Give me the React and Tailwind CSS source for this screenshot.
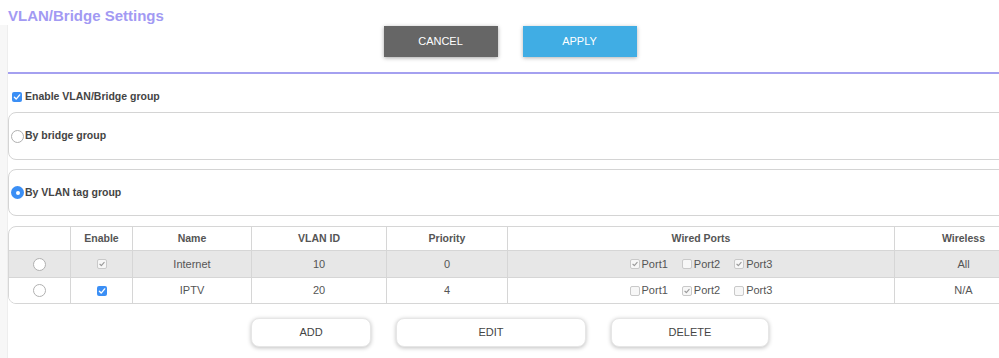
import React from "react";

const Check = ({ color }) => (
  <svg viewBox="0 0 10 10" className="w-full h-full">
    <path d="M2.4 5.3 L4.2 7.1 L7.7 2.9" fill="none" stroke={color} strokeWidth="1.4" strokeLinecap="round" strokeLinejoin="round" />
  </svg>
);

const Checkbox = ({ checked, blue }) => {
  if (blue) {
    return (
      <span className="inline-block w-[10px] h-[10px] rounded-[2px] bg-[#3b8ff5] shrink-0">
        <Check color="#ffffff" />
      </span>
    );
  }
  return (
    <span className="inline-block w-[10px] h-[10px] rounded-[2px] border border-[#c9c9c9] bg-[#f7f7f7] shrink-0">
      {checked && <Check color="#9a9a9a" />}
    </span>
  );
};

const Radio = ({ checked }) =>
  checked ? (
    <span className="w-[13px] h-[13px] rounded-full bg-[#3b8ff5] flex items-center justify-center shrink-0">
      <span className="w-[4px] h-[4px] rounded-full bg-white"></span>
    </span>
  ) : (
    <span className="w-[13px] h-[13px] rounded-full border border-[#b0b0b0] bg-white shrink-0"></span>
  );

const cols = "grid grid-cols-[61px_62px_119px_135px_121px_387px_138px]";
const cell = "flex items-center justify-center border-l border-[#d6d6d6]";

const rows = [
  { name: "Internet", id: "10", pri: "0", ports: [true, false, true], wireless: "All", enabled: "gray", bg: "bg-[#e7e7e7]", h: "h-[27px]" },
  { name: "IPTV", id: "20", pri: "4", ports: [false, true, false], wireless: "N/A", enabled: "blue", bg: "bg-white", h: "h-[26px]" },
];

export default function App() {
  return (
    <div className="flex h-[358px] overflow-hidden bg-white font-['Liberation_Sans',Arial,sans-serif]">
      <div className="w-[8px] shrink-0 mt-[25px] bg-[#f7f7f7] border-r border-[#eeeeee]"></div>
      <div className="w-[1004px] shrink-0 flex flex-col">
        <h1 className="mt-[7px] h-[18px] leading-[18px] text-[15px] font-bold text-[#a29af3]">
          VLAN/Bridge Settings
        </h1>

        <div className="mt-[1px] flex justify-center gap-[25px]">
          <button className="w-[114px] h-[31px] bg-[#666666] text-white text-[11px] shadow-[0_1px_4px_rgba(0,0,0,0.35)]">
            CANCEL
          </button>
          <button className="w-[114px] h-[31px] bg-[#40ade4] text-white text-[11px] shadow-[0_1px_4px_rgba(0,0,0,0.3)]">
            APPLY
          </button>
        </div>

        <div className="mt-[15px] h-[2px] bg-[#a4a0f0]"></div>

        <label className="mt-[16px] h-[14px] flex items-center gap-[3px] pl-[4px] text-[10.5px] font-bold text-[#444]">
          <Checkbox blue />
          Enable VLAN/Bridge group
        </label>

        <div className="mt-[8px] h-[48px] rounded-[8px] border border-[#d4d4d4] flex items-center gap-[1px] pl-[2px] text-[10.5px] font-bold text-[#444]">
          <Radio />
          By bridge group
        </div>

        <div className="mt-[9px] h-[47px] rounded-[8px] border border-[#d4d4d4] flex items-center gap-[1px] pl-[2px] text-[10.5px] font-bold text-[#444]">
          <Radio checked />
          By VLAN tag group
        </div>

        <div className="mt-[10px] w-[1024px] rounded-[8px] border border-[#d6d6d6] overflow-hidden text-[11px] text-[#555]">
          <div className={`${cols} h-[23px] font-bold text-[10.5px]`}>
            <div></div>
            <div className={cell}>Enable</div>
            <div className={cell}>Name</div>
            <div className={cell}>VLAN ID</div>
            <div className={cell}>Priority</div>
            <div className={cell}>Wired Ports</div>
            <div className={cell}>Wireless</div>
          </div>
          {rows.map((r) => (
            <div key={r.name} className={`${cols} ${r.h} ${r.bg} border-t border-[#d6d6d6]`}>
              <div className="flex items-center justify-center">
                <Radio />
              </div>
              <div className={cell}>
                <Checkbox checked blue={r.enabled === "blue"} />
              </div>
              <div className={cell}>{r.name}</div>
              <div className={cell}>{r.id}</div>
              <div className={cell}>{r.pri}</div>
              <div className={`${cell} gap-[14px]`}>
                {r.ports.map((p, i) => (
                  <span key={i} className="flex items-center gap-[2px]">
                    <Checkbox checked={p} />
                    Port{i + 1}
                  </span>
                ))}
              </div>
              <div className={cell}>{r.wireless}</div>
            </div>
          ))}
        </div>

        <div className="mt-[14px] flex justify-center gap-[25px] text-[11px] text-[#444]">
          <button className="w-[120px] h-[29px] rounded-[8px] bg-white border border-[#e6e6e6] shadow-[0_1px_4px_rgba(0,0,0,0.25)]">
            ADD
          </button>
          <button className="w-[190px] h-[29px] rounded-[8px] bg-white border border-[#e6e6e6] shadow-[0_1px_4px_rgba(0,0,0,0.25)]">
            EDIT
          </button>
          <button className="w-[158px] h-[29px] rounded-[8px] bg-white border border-[#e6e6e6] shadow-[0_1px_4px_rgba(0,0,0,0.25)]">
            DELETE
          </button>
        </div>
      </div>
    </div>
  );
}
